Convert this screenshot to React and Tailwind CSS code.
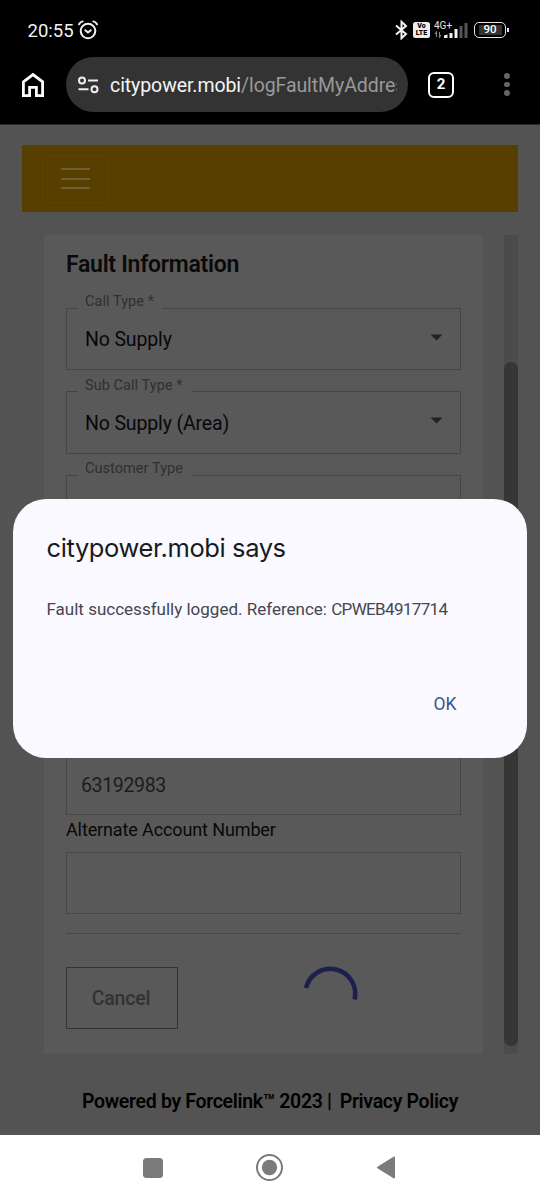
import React from 'react';

function StatusBar() {
  return (
    <div className="flex h-[57px] items-center pt-[5px] pl-[27.500px] pr-[31px] text-white">
      <span className="text-[18.5px] leading-none text-[#f2f2f2]">20:55</span>
      <svg width="22" height="20" viewBox="0 0 22 20" className="ml-[3px] -mt-[3px]" fill="none" stroke="#f2f2f2" strokeWidth="2" strokeLinecap="round">
        <circle cx="11" cy="11" r="7.3" />
        <path d="M8.3 10.2l2.7 2.3 2.8-2.3M2 4.2Q3.2 2 5.6 1.4M20 4.2Q18.800 2 16.400 1.400" />
      </svg>

      <div className="-mt-[2px] ml-auto flex items-center">
        <svg width="13" height="20" viewBox="0 0 13 20" fill="none" stroke="#f2f2f2" strokeWidth="2">
          <path d="M1 5.500l10 8.500-4.500 4.200V1.800l4.500 4.200L1 14.500" />
        </svg>
        <div className="ml-[5px] flex h-[16px] w-[17px] flex-col items-center justify-center rounded-[2.500px] bg-[#ededed] text-[7px] font-black leading-[7px] text-black">
          <span className="h-[7px]">Vo</span>
          <span className="h-[7px]">LTE</span>
        </div>
        <div className="ml-[4px] flex flex-col">
          <span className="h-[8px] text-[10px] leading-[7px] text-[#e5e5e5]">4G+</span>
          <svg width="34" height="8" viewBox="0 0 34 8" className="overflow-visible">
            <path d="M2.500 7V2L1 4M5.500 2V7L7 5" fill="none" stroke="#888" strokeWidth="1.100" />
            <path d="M10 8V5.500l3.500-1V8zM15.500 8V3H18.500v5zM20.500 8V-1H23.500v9z" fill="#f2f2f2" />
            <path d="M25.500 8V-4H28.500V8zM30.500 8V-7H33.500V8z" fill="#555" />
          </svg>
        </div>
        <div className="ml-[6px] flex h-[16px] w-[32px] items-center justify-center rounded-[5px] border-[1.500px] border-[#e5e5e5]">
          <span className="flex h-[10px] w-[23px] items-center justify-center bg-[#333] text-[11.500px] font-medium leading-none text-white">90</span>
        </div>
        <span className="ml-px h-[4px] w-[2px] bg-[#e5e5e5]" />
      </div>
    </div>
  );
}

function BrowserBar() {
  return (
    <div className="flex h-[55px] items-center pl-[21px]">
      <svg width="24" height="26" viewBox="0 0 24 26" fill="none" stroke="#fff" strokeWidth="2.800">
        <path d="M2.400 9.800L12 2.600l9.600 7.200v13.800h-6.200v-8.200H8.600v8.200H2.400z" />
      </svg>
      <div className="ml-[21px] flex h-[55px] w-[342px] items-center rounded-full bg-[#333] pl-[12px] pr-[11px]">
        <svg width="21" height="18" viewBox="0 0 21 18" className="shrink-0" fill="none" stroke="#eee" strokeWidth="2">
          <circle cx="4" cy="4.500" r="3" />
          <path d="M10 4.500h10M0.500 13.200h10" />
          <circle cx="16.500" cy="13.200" r="3" />
        </svg>
        <div className="mt-[2px] ml-[11px] overflow-hidden whitespace-nowrap text-[19.500px] leading-[28px] tracking-[-0.080px] text-[#999]">
          <span className="text-[#f5f5f5]">citypower.mobi</span>/logFaultMyAddres
        </div>
      </div>
      <div className="ml-[20px] flex h-[26px] w-[26px] items-center justify-center rounded-[6px] border-[2.500px] border-white text-[15px] font-bold leading-none text-white">
        2
      </div>
      <div className="ml-[50px] flex flex-col gap-[3px]">
        <span className="h-[5.500px] w-[5.500px] rounded-full bg-[#666]" />
        <span className="h-[5.500px] w-[5.500px] rounded-full bg-[#666]" />
        <span className="h-[5.500px] w-[5.500px] rounded-full bg-[#666]" />
      </div>
    </div>
  );
}

function SelectField({ label, value }) {
  return (
    <fieldset className="mb-[13.500px] h-[70px] shrink-0 border border-[#454545] pl-[11px] pr-[17px]">
      <legend className="h-[16px] pr-[8px] pl-[7px] text-[14.500px] leading-[3px] tracking-[0.060px] text-[#303030]">{label}</legend>
      {value && (
        <div className="flex h-[48px] items-center justify-between pl-[7px]">
          <span className="text-[19.500px] tracking-[-0.150px] text-[#080808]">{value}</span>
          <svg width="13" height="7" viewBox="0 0 13 7" className="-mt-[6px]">
            <path d="M0.500 0.500h12l-6 6z" fill="#222" />
          </svg>
        </div>
      )}
    </fieldset>
  );
}

function FaultForm() {
  return (
    <main className="flex h-[819px] w-[439px] flex-col bg-[#595959] px-[22px] pt-[15px]">
      <h2 className="mb-[20px] h-[30px] whitespace-nowrap text-[23px] font-semibold leading-[30px] tracking-[-0.270px] text-[#0a0a0a]">Fault Information</h2>
      <SelectField label="Call Type *" value="No Supply" />
      <SelectField label="Sub Call Type *" value="No Supply (Area)" />
      <SelectField label="Customer Type" />
      <div className="mt-auto flex h-[62px] w-[395px] shrink-0 items-center border border-[#474747] pt-[3px] pl-[14px] text-[19.500px] tracking-[-0.350px] text-[#1b1c20]">
        63192983
      </div>
      <label className="h-[37px] shrink-0 pt-px text-[18px] leading-[27px] tracking-[-0.120px] text-[#080808]">Alternate Account Number</label>
      <div className="h-[62px] shrink-0 border border-[#474747]" />
      <hr className="mt-[19px] shrink-0 border-[#484848]" />
      <div className="mt-[33px] mb-[25px] flex h-[62px] shrink-0">
        <button className="h-[62px] w-[112px] border border-[#333] pt-[2px] pr-[2px] text-[19.500px] font-medium tracking-[-0.200px] text-[#323232]">Cancel</button>
        <svg width="54" height="54" viewBox="0 0 54 54" className="ml-[125px] overflow-visible" fill="none" stroke="#1b204c" strokeWidth="4.600">
          <path d="M3 21A24.600 24.600 0 0 1 51.600 32.500" />
        </svg>
      </div>
    </main>
  );
}

function AlertDialog() {
  return (
    <div className="absolute left-[13px] top-[499px] flex h-[259px] w-[514px] flex-col rounded-[33px] bg-[#faf9ff] px-[33.500px] pt-[32px]">
      <h1 className="h-[34px] whitespace-nowrap font-['Inter','Roboto',sans-serif] text-[25.500px] leading-[34px] tracking-[-0.400px] text-[#181a20]">citypower.mobi says</h1>
      <p className="mt-[32px] whitespace-nowrap text-[17px] leading-[24px] text-[#45474e]">
        Fault successfully logged. Reference: <span className="tracking-[-0.650px]">CPWEB4917714</span>
      </p>
      <button className="mt-[71px] mr-[37px] self-end text-[17.500px] leading-[24px] text-[#3a5583]">OK</button>
    </div>
  );
}

function SystemNav() {
  return (
    <nav className="flex h-[65px] items-center bg-white pl-[143px]">
      <span className="h-[20px] w-[20px] rounded-[3.500px] bg-[#7b7b7b]" />
      <svg width="28" height="28" viewBox="0 0 28 28" className="ml-[93px]">
        <circle cx="13.500" cy="13.500" r="12.500" fill="none" stroke="#7b7b7b" strokeWidth="2" />
        <circle cx="13.500" cy="13.500" r="7.700" fill="#7b7b7b" />
      </svg>
      <svg width="20" height="24" viewBox="0 0 20 24" className="ml-[92px]">
        <path d="M18 1.500v20L2 11.500z" fill="#7b7b7b" stroke="#7b7b7b" strokeWidth="2" strokeLinejoin="round" />
      </svg>
    </nav>
  );
}

export default function App() {
  return (
    <div className="relative flex h-[1200px] w-[540px] flex-col overflow-hidden bg-[#535353] font-['Roboto','Liberation_Sans',sans-serif]">
      <header className="h-[125px] shrink-0 border-b border-[#292929] bg-black">
        <StatusBar />
        <BrowserBar />
      </header>

      <div className="flex flex-1 flex-col px-[22px] pt-[20px]">
        {/* Site header */}
        <div className="flex h-[67px] items-center bg-[#573f00] pl-[20px]">
          <div className="flex h-[48px] w-[66px] flex-col items-center justify-center gap-[7.500px] rounded-[5px] border border-[#5b4406]">
            <span className="h-[2px] w-[29px] bg-[#6f5e37]" />
            <span className="h-[2px] w-[29px] bg-[#6f5e37]" />
            <span className="h-[2px] w-[29px] bg-[#6f5e37]" />
          </div>
        </div>

        <div className="mt-[23px] flex justify-between pl-[22px]">
          <FaultForm />
          <div className="h-[819px] w-[14px] bg-[#4b4b4b] pt-[127px]">
            <div className="h-[684px] w-[14px] rounded-full bg-[#363636]" />
          </div>
        </div>

        <footer className="mt-[34px] flex justify-center gap-[8px] whitespace-nowrap text-[19.500px] font-semibold leading-[28px] tracking-[-0.320px] text-black">
          <span>Powered by Forcelink™ 2023 |</span>
          <span>Privacy Policy</span>
        </footer>
      </div>

      <SystemNav />
      <AlertDialog />
    </div>
  );
}
